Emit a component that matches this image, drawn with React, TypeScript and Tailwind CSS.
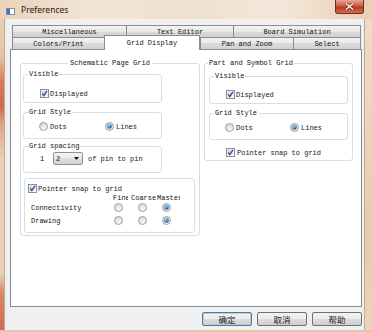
import React from "react";

const M = "font-['Liberation_Mono',monospace] text-[7px] leading-[8px] text-[#151515] whitespace-nowrap";

function Check() {
  return (
    <svg width="9" height="9" viewBox="0 0 9 9" className="shrink-0 block">
      <defs>
        <linearGradient id="cbg" x1="0" y1="0" x2="1" y2="1">
          <stop offset="0" stopColor="#c9ced6" />
          <stop offset="1" stopColor="#f7f7f7" />
        </linearGradient>
      </defs>
      <rect x="0.5" y="0.5" width="8" height="8" fill="#fff" stroke="#8e8f8f" />
      <rect x="1.5" y="1.5" width="6" height="6" fill="url(#cbg)" />
      <path d="M2.2 4.4 L3.8 6.6 L7 1.9" stroke="#2b4c9b" strokeWidth="1.3" fill="none" />
    </svg>
  );
}

function Radio({ on }: { on?: boolean }) {
  return (
    <svg width="9" height="9" viewBox="0 0 9 9" className="shrink-0 block">
      <defs>
        <radialGradient id="rbg" cx="0.6" cy="0.7" r="0.7">
          <stop offset="0" stopColor="#fbfbfb" />
          <stop offset="1" stopColor="#d2d2d2" />
        </radialGradient>
        <radialGradient id="rdot" cx="0.4" cy="0.35" r="0.7">
          <stop offset="0" stopColor="#9ad6f7" />
          <stop offset="0.6" stopColor="#2a7fc0" />
          <stop offset="1" stopColor="#123f7a" />
        </radialGradient>
      </defs>
      <circle cx="4.5" cy="4.5" r="4" fill="url(#rbg)" stroke="#9b9b9b" strokeWidth="0.9" />
      {on && <circle cx="4.5" cy="4.5" r="2.3" fill="url(#rdot)" />}
    </svg>
  );
}

const TAB =
  "h-[12px] border-t border-l border-[#898c95] bg-[linear-gradient(#f3f3f3,#e8e8e8_50%,#dadada_50%,#d2d2d2)] flex justify-center pt-[2px] shrink-0";

const BTN =
  "w-[50px] h-[14px] rounded-[2px] border border-[#707070] bg-[linear-gradient(#f2f2f2,#ebebeb_50%,#dddddd_50%,#cfcfcf)] flex items-center justify-center font-['Noto_Sans_CJK_SC',sans-serif] text-[8.5px] leading-[10px] text-[#1a1a1a]";

export default function App() {
  return (
    <div className="w-[372px] h-[332px] flex flex-col overflow-hidden bg-[linear-gradient(90deg,#ead3b9,#f3e5d6_25%,#efe0cf_50%,#f4e7da_75%,#e9d0b3)]">
      {/* title bar */}
      <div className="h-[19px] flex items-start shrink-0">
        <div className="mt-[8px] ml-[6px] w-[9px] h-[7px] border border-[#7b8ea8] bg-[linear-gradient(90deg,#3a74c4_0,#3a74c4_40%,#ffffff_40%)]" />
        <span className="ml-[6px] mt-[4px] font-['Noto_Sans',sans-serif] text-[8.5px] leading-[12px] text-[#1b1b1b]">
          Preferences
        </span>
        <div className="ml-auto mr-[8px] w-[29px] h-[14px] rounded-b-[3px] border border-t-0 border-[#6b2a22] bg-[linear-gradient(#e6a695,#cc5c46_45%,#b9391f_55%,#d46c50)] flex items-center justify-center">
          <svg width="9" height="7" viewBox="0 0 9 7">
            <path d="M1 0.5 L8 6.5 M8 0.5 L1 6.5" stroke="#5a1a10" strokeWidth="2.4" />
            <path d="M1 0.5 L8 6.5 M8 0.5 L1 6.5" stroke="#ffffff" strokeWidth="1.4" />
          </svg>
        </div>
      </div>

      <div className="flex flex-1 min-h-0">
        {/* left frame */}
        <div className="w-[5px] shrink-0 border-r border-[#b9aa9b] bg-[linear-gradient(#e8d0b6_0%,#e6c4a6_12%,#d77b5a_20%,#cf6a4c_28%,#e0a688_34%,#e9cfb3_45%,#e9cfb3_82%,#d98a68_88%,#cf6d52)]" />
        {/* client */}
        <div className="w-[359px] shrink-0 bg-[#f0f0f0] flex flex-col pt-[6px] pl-[5px]">
          <div className="w-[352px]">
            <div className="flex pl-[2px] h-[12px]">
              <div className={TAB + " w-[114px]"}>
                <span className={M}>Miscellaneous</span>
              </div>
              <div className={TAB + " w-[107px]"}>
                <span className={M}>Text Editor</span>
              </div>
              <div className={TAB + " w-[128px] border-r"}>
                <span className={M}>Board Simulation</span>
              </div>
            </div>
            <div className="flex pl-[2px] h-[12px] items-end">
              <div className={TAB + " w-[92px]"}>
                <span className={M}>Colors/Print</span>
              </div>
              <div className="relative z-10 -mb-[1px] h-[15px] w-[96px] border-t border-l border-r border-[#898c95] bg-white flex justify-center pt-[3px] shrink-0">
                <span className={M}>Grid Display</span>
              </div>
              <div className={TAB + " w-[93px]"}>
                <span className={M}>Pan and Zoom</span>
              </div>
              <div className={TAB + " w-[68px] border-r"}>
                <span className={M}>Select</span>
              </div>
            </div>

            {/* panel */}
            <div className="w-[352px] h-[258px] border border-[#898c95] bg-white flex items-start pt-[13px] pl-[9px] gap-[4px]">
              {/* Schematic Page Grid */}
              <div className="relative w-[180px] h-[173px] border border-[#d5dfe5] rounded-[3px] flex flex-col items-start pl-[2px] pt-[10px] shrink-0">
                <div className="absolute -top-[5px] left-0 right-0 flex justify-center">
                  <span className={M + " bg-white px-[2px]"}>Schematic Page Grid</span>
                </div>

                <div className="relative w-[139px] h-[29px] border border-[#d5dfe5] rounded-[3px] flex items-start pl-[16px] pt-[14px]">
                  <span className={M + " absolute -top-[5px] left-[4px] bg-white px-[1px]"}>Visible</span>
                  <div className="flex items-center gap-[1px]">
                    <Check />
                    <span className={M}>Displayed</span>
                  </div>
                </div>

                <div className="relative mt-[9px] w-[139px] h-[27px] border border-[#d5dfe5] rounded-[3px] flex items-start pl-[15px] pt-[9px]">
                  <span className={M + " absolute -top-[5px] left-[4px] bg-white px-[1px]"}>Grid Style</span>
                  <div className="w-[66px] flex items-center gap-[2px]">
                    <Radio />
                    <span className={M}>Dots</span>
                  </div>
                  <div className="flex items-center gap-[2px]">
                    <Radio on />
                    <span className={M}>Lines</span>
                  </div>
                </div>

                <div className="relative mt-[7px] w-[139px] h-[27px] border border-[#d5dfe5] rounded-[3px] flex items-start pl-[16px] pt-[5px]">
                  <span className={M + " absolute -top-[5px] left-[4px] bg-white px-[1px]"}>Grid spacing</span>
                  <div className="flex items-center">
                    <span className={M + " w-[13px]"}>1</span>
                    <div className="w-[30px] h-[13px] rounded-[2px] border border-[#8e8f8f] bg-[linear-gradient(#f4f4f4,#ececec_50%,#dedede_50%,#d4d4d4)] flex items-center pl-[2px] pr-[3px]">
                      <span className={M}>2</span>
                      <svg width="5" height="3" viewBox="0 0 5 3" className="ml-auto">
                        <path d="M0 0 H5 L2.5 3 Z" fill="#111" />
                      </svg>
                    </div>
                    <span className={M + " ml-[5px]"}>of pin to pin</span>
                  </div>
                </div>

                <div className="mt-[5px] ml-[1px] w-[171px] h-[55px] border border-[#d5dfe5] rounded-[3px] flex flex-col pl-[3px] pt-[5px]">
                  <div className="flex items-center gap-[1px]">
                    <Check />
                    <span className={M}>Pointer snap to grid</span>
                  </div>
                  <div className="mt-[1px] h-[8px] flex ml-[85px]">
                    <span className={M + " w-[15px] overflow-hidden mr-[3px]"}>Fine</span>
                    <span className={M + " w-[26px]"}>Coarse</span>
                    <span className={M + " w-[23px] overflow-hidden"}>Master</span>
                  </div>
                  <div className="mt-[1px] h-[9px] flex items-center">
                    <span className={M + " w-[86px] pl-[3px]"}>Connectivity</span>
                    <Radio />
                    <div className="w-[15px]" />
                    <Radio />
                    <div className="w-[15px]" />
                    <Radio on />
                  </div>
                  <div className="mt-[4px] h-[9px] flex items-center">
                    <span className={M + " w-[86px] pl-[3px]"}>Drawing</span>
                    <Radio />
                    <div className="w-[15px]" />
                    <Radio />
                    <div className="w-[15px]" />
                    <Radio on />
                  </div>
                </div>
              </div>

              {/* Part and Symbol Grid */}
              <div className="relative w-[149px] h-[98px] border border-[#d5dfe5] rounded-[3px] flex flex-col items-start pl-[4px] pt-[12px] shrink-0">
                <span className={M + " absolute -top-[5px] left-[3px] bg-white px-[1px]"}>Part and Symbol Grid</span>

                <div className="relative w-[139px] h-[28px] border border-[#d5dfe5] rounded-[3px] flex items-start pl-[16px] pt-[13px]">
                  <span className={M + " absolute -top-[5px] left-[4px] bg-white px-[1px]"}>Visible</span>
                  <div className="flex items-center gap-[1px]">
                    <Check />
                    <span className={M}>Displayed</span>
                  </div>
                </div>

                <div className="relative mt-[9px] w-[139px] h-[27px] border border-[#d5dfe5] rounded-[3px] flex items-start pl-[15px] pt-[9px]">
                  <span className={M + " absolute -top-[5px] left-[4px] bg-white px-[1px]"}>Grid Style</span>
                  <div className="w-[65px] flex items-center gap-[2px]">
                    <Radio />
                    <span className={M}>Dots</span>
                  </div>
                  <div className="flex items-center gap-[2px]">
                    <Radio on />
                    <span className={M}>Lines</span>
                  </div>
                </div>

                <div className="mt-[8px] ml-[17px] flex items-center gap-[2px]">
                  <Check />
                  <span className={M}>Pointer snap to grid</span>
                </div>
              </div>
            </div>

            {/* buttons */}
            <div className="mt-[5px] flex justify-end gap-[5px]">
              <div className={BTN + " border-[#3c7fb1] bg-[linear-gradient(#eaf6fd,#d9f0fc_50%,#bee6fd_50%,#a7d9f5)] shadow-[inset_0_0_0_1px_#9ed6f5]"}>确定</div>
              <div className={BTN}>取消</div>
              <div className={BTN}>帮助</div>
            </div>
          </div>
        </div>
        {/* right frame */}
        <div className="flex-1 border-l border-[#b9aa9b] bg-[linear-gradient(#efdcc6,#ebd3b7_40%,#e8cba9_70%,#ecd4b8)]" />
      </div>
      <div className="h-[2px] shrink-0 bg-[#e2c7aa]" />
    </div>
  );
}
